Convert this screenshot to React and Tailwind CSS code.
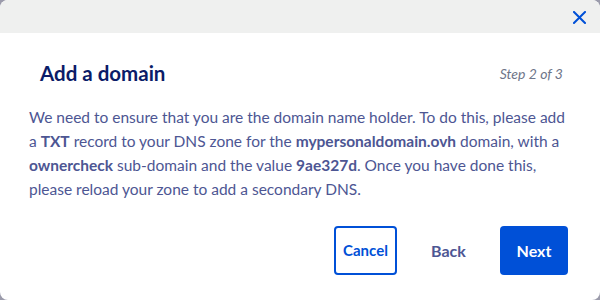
export default function App() {
  return (
    <div className="w-[600px] h-[300px] bg-[#9b9bab]" style={{ fontFamily: "Lato, 'Open Sans', sans-serif" }}>
      <div className="w-full h-full bg-white rounded-[8px] overflow-hidden flex flex-col">
        <div className="h-[33px] bg-[#eff0ef] flex items-center justify-end pr-[14px]">
          <svg width="13" height="13" viewBox="0 0 13 13" className="mt-[1px]">
            <path d="M1 1L12 12M12 1L1 12" stroke="#0050d7" strokeWidth="2" strokeLinecap="square" />
          </svg>
        </div>
        <div className="flex items-center justify-between pl-[40px] pr-[37px] mt-[27px]">
          <h1 className="text-[20.5px] font-bold text-[#0b1c68] leading-[26px]">Add a domain</h1>
          <span className="text-[14px] italic text-[#6e7589]">Step 2 of 3</span>
        </div>
        <p className="mx-[29px] mt-[19px] text-[15.5px] leading-[24px] text-[#4d5693]">
          We need to ensure that you are the domain name holder. To do this, please add a <b>TXT</b> record to your DNS zone for the <b>mypersonaldomain.ovh</b> domain, with a <b>ownercheck</b> sub-domain and the value <b>9ae327d</b>. Once you have done this, please reload your zone to add a secondary DNS.
        </p>
        <div className="flex justify-end items-center mt-[25px] pr-[32px]">
          <button className="w-[63px] h-[49px] border-2 border-[#0050d7] rounded-[4px] text-[#0050d7] font-bold text-[15px]">Cancel</button>
          <button className="ml-[23px] w-[57px] h-[49px] text-[#4d5693] font-bold text-[16px]">Back</button>
          <button className="ml-[23px] w-[68px] h-[49px] bg-[#0050d7] rounded-[4px] text-white font-bold text-[16px]">Next</button>
        </div>
      </div>
    </div>
  );
}
